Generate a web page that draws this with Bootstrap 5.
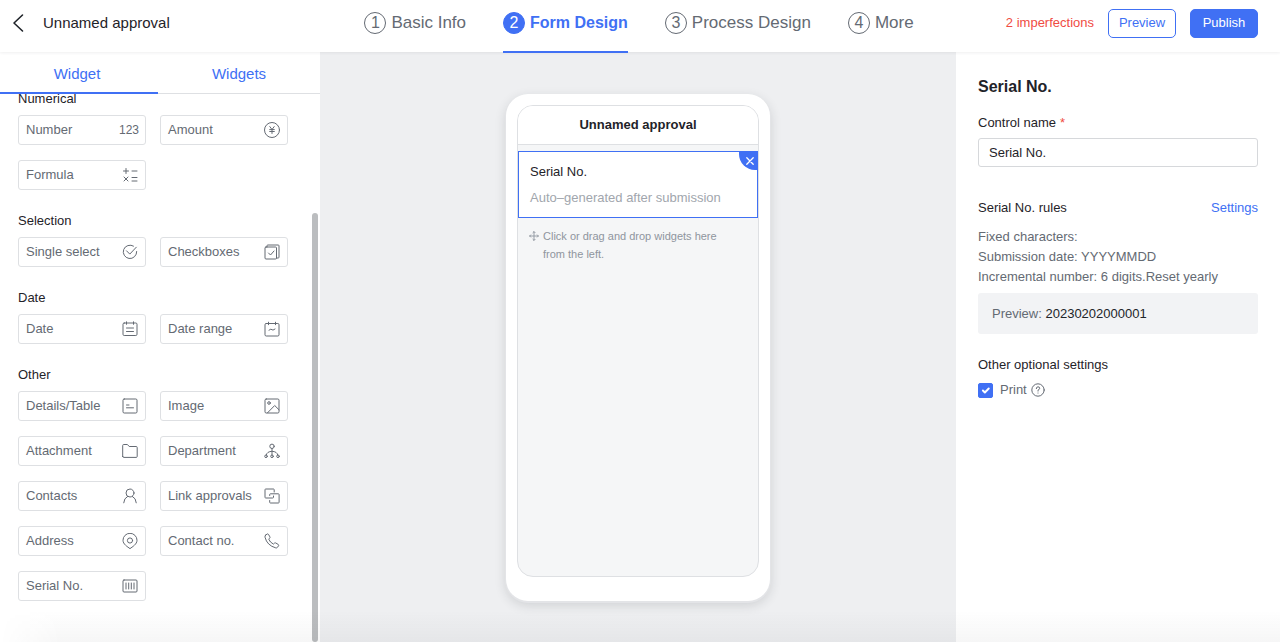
<!DOCTYPE html>
<html lang="en">
<head>
<meta charset="utf-8">
<meta name="viewport" content="width=device-width, initial-scale=1">
<title>Unnamed approval</title>
<link href="https://cdn.jsdelivr.net/npm/bootstrap@5.3.0/dist/css/bootstrap.min.css" rel="stylesheet">
<style>
:root{--blue:#4070f4;--ink:#1f2329;--muted:#646a73;--faint:#8f959e;--line:#dee0e3}
body{font-family:"Liberation Sans",Arial,sans-serif;font-size:13px;line-height:20px;color:var(--ink);background:#fff}
a{color:var(--blue);text-decoration:none}
svg{display:block;flex:none;fill:none;stroke:currentColor;stroke-linecap:round;stroke-linejoin:round}
.top-bar{height:52px;flex:none;z-index:2;box-shadow:0 1px 3px rgba(31,35,41,.07)}
.side-start{flex:1 1 0;padding:0 0 6px 12px;gap:19px}
.side-end{flex:1 1 0;padding:0 22px 6px 0;gap:14px}
.back{color:var(--ink)}
.doc-title{font-size:15px}
.steps{gap:37px;font-size:17px;padding-left:8px}
.step{gap:5px;color:var(--muted);padding-bottom:7px;height:53px}
.step-no{width:22px;height:22px;border:1px solid var(--muted);line-height:20px;font-size:16px}
.step.active{color:var(--blue);font-size:16px;font-weight:700;border-bottom:2px solid var(--blue);padding-bottom:5px}
.step.active .step-no{background:var(--blue);border-color:var(--blue);color:#fff;font-weight:400}
.warn{color:#f04b43}
.top-btn{font-size:13px;line-height:20px;height:29px;width:68px;padding:0;border-radius:5px;--bs-btn-color:var(--blue);--bs-btn-border-color:var(--blue);--bs-btn-bg:#fff}
.top-btn.solid{--bs-btn-color:#fff;--bs-btn-bg:var(--blue)}
.left-panel{width:320px;flex:none}
.tab-row{height:42px;border-bottom:1px solid var(--line);flex:none}
.tab-row button{border:0;background:none;color:var(--blue);font-size:15px;padding:3px 0 0;border-bottom:2px solid transparent;margin-bottom:-1px}
.tab-row button:first-child{width:158px;border-color:var(--blue);padding-right:4px}
.widget-list{padding:0 32px 0 18px;margin-top:-5px}
.widget-group{margin-bottom:21px}
.widget-group h2{font-size:13px;line-height:20px;font-weight:400;margin:0 0 6px}
.widget-grid{display:grid;grid-template-columns:1fr 1fr;gap:15px 14px}
.widget{height:30px;border:1px solid var(--line);border-radius:3px;background:#fff;color:var(--muted);padding:0 7px;font-size:13px}
.digits{font-size:12px;margin-right:-1px}
.thumb{width:6px;top:161px;bottom:0;right:2px;border-radius:3px;background:#bbbdbf}
.canvas-area{background:#eeeff1;padding:42px 0 41px;min-width:264px}
.phone{width:264px;border-radius:22px;padding:11px 11px 24px;background:#fff;box-shadow:0 1px 0 1px #e3e4e7,0 4px 12px rgba(31,35,41,.16)}
.screen{border:1px solid var(--line);border-radius:16px;background:#f5f6f7}
.screen-title{height:39px;border-bottom:1px solid var(--line);font-weight:700;border-radius:15px 15px 0 0}
.field-card{border:1px solid var(--blue);margin-top:6px;height:67px;padding:10px 11px}
.field-card p{margin:6px 0 0;color:#a1a6ad}
.remove{top:-1px;right:-1px;width:19px;height:19px;border:0;padding:0 0 0 3px;background:var(--blue);color:#fff;border-radius:0 0 0 16px}
.hint{padding:9px 20px 0 11px;gap:4px;font-size:11px;line-height:18px;color:var(--faint)}
.hint svg{margin-top:4px}
.right-panel{width:324px;flex:none;padding:25px 22px 0}
.right-panel h1{font-size:16px;line-height:20px;font-weight:700;margin:0 0 16px}
.name-input{height:29px;border:1px solid #d6d8db;border-radius:3px;font-size:13px;padding:0 10px;color:var(--ink);margin:5px 0 31px}
.rules{color:var(--muted);margin:9px 0 6px}
.sample{background:#f2f3f5;height:41px;border-radius:3px;padding:0 14px;color:var(--muted);margin-bottom:21px}
.print-row{color:var(--muted);margin-top:5px}
.print-row .form-check-input{width:15px;height:15px;margin:0 7px 0 0;border-radius:2px}
.print-row .form-check-input:checked{background-color:var(--blue);border-color:var(--blue)}
.bottom-shade{height:32px;left:0;right:0;bottom:0;pointer-events:none;z-index:3;background:linear-gradient(to bottom,rgba(31,35,41,0),rgba(31,35,41,.04));-webkit-mask-image:linear-gradient(to right,transparent,#000 60px);mask-image:linear-gradient(to right,transparent,#000 60px)}
</style>
</head>
<body>
<div class="d-flex flex-column vh-100 overflow-hidden position-relative">
<header class="top-bar d-flex align-items-center bg-white position-relative">
  <div class="side-start d-flex align-items-center">
    <a href="#" class="back" aria-label="Back"><svg width="12" height="20" viewBox="0 0 12 20" stroke-width="1.600"><path d="M10.500 2 2 10l8.500 8"/></svg></a>
    <span class="doc-title">Unnamed approval</span>
  </div>
  <nav class="steps d-flex align-self-start">
    <a href="#" class="step d-flex align-items-center"><span class="step-no rounded-circle text-center">1</span>Basic Info</a>
    <a href="#" class="step active d-flex align-items-center"><span class="step-no rounded-circle text-center">2</span>Form Design</a>
    <a href="#" class="step d-flex align-items-center"><span class="step-no rounded-circle text-center">3</span>Process Design</a>
    <a href="#" class="step d-flex align-items-center"><span class="step-no rounded-circle text-center">4</span>More</a>
  </nav>
  <div class="side-end d-flex align-items-center justify-content-end">
    <span class="warn">2 imperfections</span>
    <button type="button" class="btn top-btn">Preview</button>
    <button type="button" class="btn top-btn solid">Publish</button>
  </div>
</header>
<div class="d-flex flex-grow-1 overflow-hidden">
  <aside class="left-panel d-flex flex-column bg-white position-relative">
    <div class="tab-row d-flex"><button type="button">Widget</button><button type="button" class="flex-grow-1">Widgets</button></div>
    <div class="overflow-hidden flex-grow-1">
      <div class="widget-list">
        <section class="widget-group"><h2>Numerical</h2><div class="widget-grid">
          <button type="button" class="widget d-flex align-items-center justify-content-between">Number<span class="digits">123</span></button>
          <button type="button" class="widget d-flex align-items-center justify-content-between">Amount<svg width="16" height="16" viewBox="0 0 16 16"><circle cx="8" cy="8" r="7.500"/><path d="M5.800 4.600 8 7.500l2.200-2.900M8 7.500v4M5.700 7.600h4.600M5.700 9.500h4.600"/></svg></button>
          <button type="button" class="widget d-flex align-items-center justify-content-between">Formula<svg width="16" height="16" viewBox="0 0 16 16"><path d="M1.500 4h5M4 1.500v5M10 4h5M2 10l4 4M6 10l-4 4M10 10.500h5M10 14h5"/></svg></button>
        </div></section>
        <section class="widget-group"><h2>Selection</h2><div class="widget-grid">
          <button type="button" class="widget d-flex align-items-center justify-content-between">Single select<svg width="16" height="16" viewBox="0 0 16 16"><path d="M11.500 2.100A6.700 6.700 0 1 0 14.700 7.500M4.500 6.800l3.300 3.300 6.500-6.900"/></svg></button>
          <button type="button" class="widget d-flex align-items-center justify-content-between">Checkboxes<svg width="16" height="16" viewBox="0 0 16 16"><rect x="1" y="3" width="11.500" height="12" rx="1"/><path d="M3 3V1.800Q3 1 3.800 1h10.400q.8 0 .8.800v11.400q0 .8-.8.800h-1.700M4.500 9l2 2L10 7"/></svg></button>
        </div></section>
        <section class="widget-group"><h2>Date</h2><div class="widget-grid">
          <button type="button" class="widget d-flex align-items-center justify-content-between">Date<svg width="16" height="16" viewBox="0 0 16 16"><rect x="1" y="2" width="14" height="12.500" rx="1.200"/><path d="M4.500.8v2.500M11.500.8v2.500M4.500 7h7M4.500 10.500h7"/></svg></button>
          <button type="button" class="widget d-flex align-items-center justify-content-between">Date range<svg width="16" height="16" viewBox="0 0 16 16"><rect x="1" y="2.500" width="14" height="12.500" rx="1.200"/><path d="M4.500 1.200v2.500M11.500 1.200v2.500M5 9.200l1.800-1 2.200.9 2-1.100"/></svg></button>
        </div></section>
        <section class="widget-group"><h2>Other</h2><div class="widget-grid">
          <button type="button" class="widget d-flex align-items-center justify-content-between">Details/Table<svg width="16" height="16" viewBox="0 0 16 16"><rect x="1" y="1" width="14" height="14" rx="1.200"/><path d="M4.500 7h2.500M4.500 9.800h7"/></svg></button>
          <button type="button" class="widget d-flex align-items-center justify-content-between">Image<svg width="16" height="16" viewBox="0 0 16 16"><rect x="1" y="1" width="14" height="14" rx="1.200"/><circle cx="5" cy="5" r="1.300"/><path d="m3.500 14.800 7.200-7.300L15 11.800"/></svg></button>
          <button type="button" class="widget d-flex align-items-center justify-content-between">Attachment<svg width="16" height="16" viewBox="0 0 16 16"><path d="M.7 13.500v-11q0-1 1-1h3.700l1.800 2h7q1 0 1 1v9q0 .9-1 .9H1.700q-1 0-1-.9z"/></svg></button>
          <button type="button" class="widget d-flex align-items-center justify-content-between">Department<svg width="16" height="16" viewBox="0 0 16 16"><circle cx="8" cy="3.300" r="2.200"/><circle cx="2" cy="13.300" r="1.300"/><circle cx="8" cy="13.300" r="1.300"/><circle cx="14" cy="13.300" r="1.300"/><path d="M8 5.500V12M2.200 12Q3 8.500 8 8.300q5 .2 5.800 3.700"/></svg></button>
          <button type="button" class="widget d-flex align-items-center justify-content-between">Contacts<svg width="16" height="16" viewBox="0 0 16 16"><circle cx="8" cy="5" r="4"/><path d="M1.700 14.800q.2-4.600 4-6.500M14.300 14.800q-.2-4.600-4-6.500"/></svg></button>
          <button type="button" class="widget d-flex align-items-center justify-content-between">Link approvals<svg width="16" height="16" viewBox="0 0 16 16"><path d="M10.200 4V1.700q0-.7-.7-.7H1.700Q1 1 1 1.700v7.600q0 .7.700.7h7q.8 0 .8-.8V8M5.700 7.500v-1q0-.7.700-.7h8q.7 0 .7.700v7.800q0 .7-.7.700h-8q-.7 0-.7-.7v-1.800"/></svg></button>
          <button type="button" class="widget d-flex align-items-center justify-content-between">Address<svg width="16" height="16" viewBox="0 0 16 16"><circle cx="8" cy="7.500" r="2.600"/><path d="M8 15.600C5.500 13.800 1 11.200 1 7.300a7 7 0 0 1 14 0c0 3.900-4.500 6.500-7 8.300z"/></svg></button>
          <button type="button" class="widget d-flex align-items-center justify-content-between">Contact no.<svg width="16" height="16" viewBox="0 0 16 16"><path d="M1.500 2.200 3.200 1q.8-.4 1.300.4l1.400 2.500q.4.700-.3 1.300l-.9.900q1.300 3.300 4.700 5l1.100-1q.6-.5 1.300-.1l2.500 1.500q.8.500.3 1.200l-1.200 1.700q-.6.700-1.600.5Q3 12.400 1 4.200.7 3 1.500 2.200z"/></svg></button>
          <button type="button" class="widget d-flex align-items-center justify-content-between">Serial No.<svg width="16" height="16" viewBox="0 0 16 16"><rect x="1" y="2" width="14" height="12" rx="1"/><path d="M4 5v6M6.700 5v6M9.300 5v6M12 5v6"/></svg></button>
        </div></section>
      </div>
    </div>
    <div class="thumb position-absolute"></div>
  </aside>
  <main class="canvas-area flex-grow-1 d-flex justify-content-center">
    <div class="phone d-flex flex-column">
      <div class="screen flex-grow-1">
        <div class="screen-title bg-white d-flex align-items-center justify-content-center">Unnamed approval</div>
        <div class="field-card bg-white position-relative">
          <div>Serial No.</div><p>Auto–generated after submission</p>
          <button type="button" class="remove position-absolute d-flex align-items-center justify-content-center" aria-label="Remove"><svg width="8" height="8" viewBox="0 0 8 8" stroke-width="1.300"><path d="m.8.800 6.400 6.400M7.200.8.800 7.200"/></svg></button>
        </div>
        <div class="hint d-flex"><svg width="10" height="10" viewBox="0 0 10 10" stroke-width=".9"><path d="M5 .7v8.600M.7 5h8.600M3.900 1.700 5 .6l1.100 1.100M3.900 8.300 5 9.400l1.100-1.100M1.700 3.900.6 5l1.100 1.100M8.300 3.900 9.400 5 8.300 6.100"/></svg><span>Click or drag and drop widgets here from the left.</span></div>
      </div>
    </div>
  </main>
  <aside class="right-panel bg-white">
    <h1>Serial No.</h1>
    <label for="control-name" class="d-block">Control name<span class="warn ms-1">*</span></label>
    <input id="control-name" type="text" class="name-input w-100 d-block" value="Serial No.">
    <div class="d-flex justify-content-between"><span>Serial No. rules</span><a href="#">Settings</a></div>
    <div class="rules">Fixed characters:<br>Submission date: YYYYMMDD<br>Incremental number: 6 digits.Reset yearly</div>
    <div class="sample d-flex align-items-center"><span>Preview: <span class="text-dark">20230202000001</span></span></div>
    <div>Other optional settings</div>
    <div class="print-row d-flex align-items-center"><input class="form-check-input" type="checkbox" id="print" checked><label for="print" class="me-1">Print</label><svg width="14" height="14" viewBox="0 0 14 14"><circle cx="7" cy="7" r="6.200"/><path d="M5.300 5.600q0-1.800 1.700-1.800t1.700 1.500Q8.700 6.400 7 7.200v.9M7 10v.1"/></svg></div>
  </aside>
</div>
<div class="bottom-shade position-absolute"></div>
</div>
<script src="https://cdn.jsdelivr.net/npm/bootstrap@5.3.0/dist/js/bootstrap.bundle.min.js"></script>
</body>
</html>
